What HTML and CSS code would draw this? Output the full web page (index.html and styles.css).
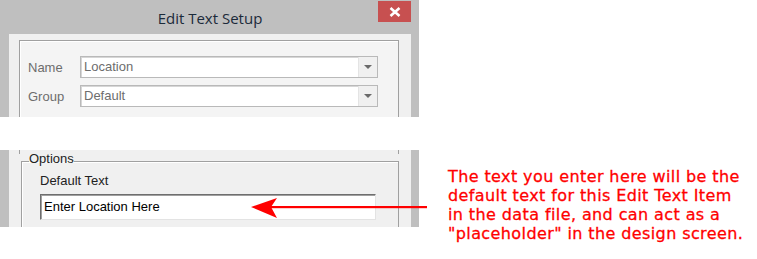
FILE: index.html
```html
<!DOCTYPE html>
<html lang="en">
<head>
<meta charset="UTF-8">
<title>Edit Text Setup</title>
<link rel="stylesheet" href="styles.css">
</head>
<body>
<div class="page">
  <div class="shots">
    <div class="win win-top">
      <div class="titlebar">
        <span></span>
        <span class="title">Edit Text Setup</span>
        <span class="close">
          <svg width="12" height="10" viewBox="0 0 12 10"><path d="M1.5 1 L10.5 9 M10.5 1 L1.5 9" stroke="#fff" stroke-width="2.6"/></svg>
        </span>
      </div>
      <div class="client">
        <div class="group">
          <div class="row">
            <span class="lbl">Name</span>
            <div class="combo"><span class="val">Location</span><span class="drop"></span></div>
          </div>
          <div class="row">
            <span class="lbl">Group</span>
            <div class="combo"><span class="val">Default</span><span class="drop"></span></div>
          </div>
        </div>
      </div>
    </div>

    <div class="win win-bottom">
      <div class="client">
        <div class="group-end"></div>
        <fieldset class="options">
          <legend>Options</legend>
          <div class="field-lbl">Default Text</div>
          <div class="textbox">Enter Location Here</div>
        </fieldset>
      </div>
    </div>
  </div>

  <p class="note">The text you enter here will be the<br>
  default text for this Edit Text Item<br>
  in the data file, and can act as a<br>
  "placeholder" in the design screen.</p>

  <svg class="arrow" width="180" height="22" viewBox="0 0 180 22">
    <rect x="20" y="9" width="157" height="2.2" fill="#ff0000"/>
    <polygon points="1,10 27,1 21,10 27,21" fill="#ff0000"/>
  </svg>
</div>
</body>
</html>
```

FILE: styles.css
```css
body {
  margin: 0;
  background: #fff;
  font-family: "Liberation Sans", Arial, sans-serif;
}

.page {
  position: relative;
  display: flex;
  width: 757px;
  height: 259px;
}

.shots {
  width: 419px;
}

/* window frames */
.win {
  background: #bfbfbf;
  padding: 0 8px 0 9px;
}

.win-top {
  height: 117px;
  margin-bottom: 33px;
}

.win-bottom {
  height: 77px;
}

.titlebar {
  display: grid;
  grid-template-columns: 1fr auto 1fr;
  height: 34px;
  margin: 0 -8px 0 -9px;
  padding: 0 8px 0 9px;
}

.title {
  font-family: "Open Sans", "Noto Sans", sans-serif;
  font-size: 15px;
  color: #1b2a3a;
  line-height: 34px;
  margin-top: 1px;
}

.close {
  justify-self: end;
  align-self: start;
  margin-top: 1px;
  width: 33px;
  height: 21px;
  background: #c75050;
  display: flex;
  align-items: center;
  justify-content: center;
}

.client {
  background: #f0f0f0;
  height: 100%;
  overflow: hidden;
}

.win-top .client {
  height: 83px;
}

/* first group box */
.group {
  margin: 6px 12px 0 10px;
  height: 100px;
  border: 1px solid #a0a0a0;
  border-bottom: none;
  box-shadow: inset 1px 1px #fff;
  background: #f4f4f4;
  padding: 15px 20px 0 8px;
  display: flex;
  flex-direction: column;
  gap: 7px;
}

.row {
  display: flex;
  align-items: center;
}

.lbl {
  width: 52px;
  font-size: 13px;
  color: #6d6d6d;
}

.combo {
  flex: 1;
  display: flex;
  height: 22px;
  box-sizing: border-box;
  border: 1px solid #b9b9b9;
  box-shadow: inset 1px 1px #d6d6d6;
  background: #fff;
}

.val {
  flex: 1;
  font-size: 13px;
  color: #6d6d6d;
  line-height: 20px;
  padding-left: 3px;
}

.drop {
  width: 18px;
  background: #f0f0f0;
  border-left: 1px solid #e4e4e4;
  position: relative;
}

.drop::after {
  content: "";
  position: absolute;
  left: 5px;
  top: 8px;
  border-left: 4px solid transparent;
  border-right: 4px solid transparent;
  border-top: 4px solid #6a6a6a;
}

/* second piece */
.group-end {
  height: 4px;
  margin: 0 12px 0 10px;
  border-left: 1px solid #a0a0a0;
  border-right: 1px solid #a0a0a0;
}

.options {
  margin: -2px 12px 0 12px;
  padding: 3px 22px 8px 18px;
  border: 1px solid #a0a0a0;
  box-shadow: inset 1px 1px #fff;
  min-width: 0;
}

.options legend {
  padding: 0 0 4px;
  margin-left: -11px;
  font-size: 13px;
  line-height: 14px;
  color: #222;
}

.field-lbl {
  font-size: 13px;
  color: #222;
  line-height: 16px;
}

.textbox {
  margin-top: 5px;
  height: 26px;
  box-sizing: border-box;
  border: 1px solid;
  border-color: #6e6e6e #e3e3e3 #e3e3e3 #6e6e6e;
  box-shadow: inset 1px 1px #a0a0a0;
  background: #fff;
  font-size: 13px;
  color: #000;
  line-height: 24px;
  padding-left: 3px;
}

/* annotation */
.note {
  margin: 0;
  padding: 167px 0 0 29px;
  font-family: "DejaVu Sans", Verdana, sans-serif;
  font-size: 16px;
  letter-spacing: 0.4px;
  line-height: 19px;
  color: #ff0000;
  -webkit-text-stroke: 0.3px #ff0000;
  white-space: nowrap;
}

.arrow {
  position: absolute;
  left: 250px;
  top: 197px;
}
```
